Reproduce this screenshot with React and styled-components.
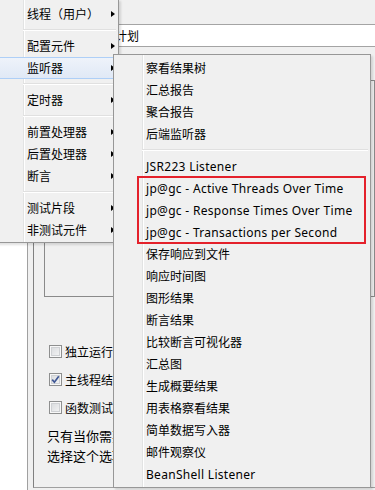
import styled, { createGlobalStyle } from "styled-components";

const GlobalStyle = createGlobalStyle`
  html, body {
    margin: 0;
    padding: 0;
    background: #f0f0f0;
  }
`;

const Screen = styled.div`
  position: relative;
  width: 375px;
  height: 490px;
  overflow: hidden;
  display: flex;
  background: #f0f0f0;
  font-family: "Noto Sans", "Noto Sans CJK SC", sans-serif;
  font-size: 12px;
  color: #000;
`;

const TreePane = styled.div`
  width: 28px;
  flex-shrink: 0;
  background: #fff;
  border-right: 1px solid #a0a0a0;
  box-sizing: border-box;
`;

const Splitter = styled.div`
  width: 5px;
  flex-shrink: 0;
`;

const Panel = styled.div`
  flex: 1;
  min-width: 0;
  height: 488px;
  box-sizing: border-box;
  border-left: 1px solid #808080;
  border-bottom: 1px solid #a0a0a0;
  display: flex;
  flex-direction: column;
`;

const NameRow = styled.div`
  margin-top: 24px;
  height: 23px;
  display: flex;
  align-items: center;
`;

const NameLabel = styled.span`
  width: 52px;
  padding-left: 6px;
  box-sizing: border-box;
  font-family: "Noto Sans CJK SC", sans-serif;
`;

const NameField = styled.div`
  flex: 1;
  height: 23px;
  box-sizing: border-box;
  background: #fff;
  border: 1px solid #a4a4a4;
  border-right: none;
  padding-left: 4px;
  display: flex;
  align-items: center;
  font-family: "Noto Sans CJK SC", sans-serif;
  white-space: nowrap;
`;

const GroupBox = styled.div`
  margin: 33px 0 0 10px;
  height: 217px;
  box-sizing: border-box;
  border: 1px solid #8a8a8a;
  flex-shrink: 0;
`;

const Options = styled.div`
  margin: 40px 20px 0 0;
  display: flex;
  flex-direction: column;
  overflow: hidden;
`;

const CheckRow = styled.label`
  height: 28px;
  padding-left: 15px;
  display: flex;
  align-items: center;
  gap: 3px;
  white-space: nowrap;
  font-family: "Noto Sans CJK SC", sans-serif;
  font-size: 12px;
`;

const Box = styled.span`
  width: 13px;
  height: 13px;
  flex-shrink: 0;
  box-sizing: border-box;
  border: 1px solid #8e8f8f;
  background: linear-gradient(135deg, #d6d8db, #f7f7f7);
  box-shadow: inset 0 0 0 1px #f8f8f8, inset 0 0 0 2px #cfd1d4;
  display: flex;
  align-items: center;
  justify-content: center;
`;

const Notes = styled.div`
  margin: 5px 20px 0 13px;
  overflow: hidden;
  font-family: "Noto Sans CJK SC", sans-serif;
  font-size: 13px;
  line-height: 20px;
  white-space: nowrap;
`;

const Menu = styled.div`
  position: absolute;
  left: ${(p) => p.$x}px;
  top: ${(p) => p.$y}px;
  width: ${(p) => p.$w}px;
  box-sizing: border-box;
  border: 1px solid #979797;
  padding: ${(p) => p.$pad};
  background:
    linear-gradient(
      to right,
      transparent 28px,
      #e2e3e3 28px,
      #e2e3e3 29px,
      #ffffff 29px,
      #ffffff 30px,
      transparent 30px
    ),
    #f0f0f0;
  box-shadow: 2px 2px 2px rgba(0, 0, 0, 0.12);
  display: flex;
  flex-direction: column;
`;

const Item = styled.div`
  height: 22px;
  box-sizing: border-box;
  padding: 0 0 0 29px;
  border: 1px solid ${(p) => (p.$active ? "#aecff7" : "transparent")};
  border-radius: 3px;
  background: ${(p) =>
    p.$active ? "linear-gradient(#eef3fa, #e0e9f6)" : "transparent"};
  display: flex;
  align-items: center;
  white-space: nowrap;
  font-family: "Noto Sans", "Noto Sans CJK SC", sans-serif;
  font-size: 12px;
  letter-spacing: ${(p) => (p.$latin ? "0.3px" : "0")};
`;

const Arrow = styled.span`
  margin-left: auto;
  width: 0;
  height: 0;
  border-top: 3.5px solid transparent;
  border-bottom: 3.5px solid transparent;
  border-left: 4px solid #000;
`;

const Separator = styled.div`
  height: 10px;
  margin-left: 26px;
  display: flex;
  align-items: center;
  &::before {
    content: "";
    flex: 1;
    height: 1px;
    background: #e0e0e0;
    border-bottom: 1px solid #fff;
  }
`;

const Marked = styled.div`
  position: relative;
  &::after {
    content: "";
    position: absolute;
    left: 21px;
    right: 2px;
    top: -1px;
    bottom: -1px;
    border: 2px solid #e4212b;
    pointer-events: none;
  }
`;

const Check = ({ checked }) => (
  <Box>
    {checked && (
      <svg width="9" height="9" viewBox="0 0 9 9">
        <path d="M1.2 4.6 L3.4 7.2 L7.8 1.2" stroke="#3f5795" strokeWidth="1.7" fill="none" />
      </svg>
    )}
  </Box>
);

const leftItems = [
  "线程（用户）",
  "-",
  "配置元件",
  "监听器",
  "-",
  "定时器",
  "-",
  "前置处理器",
  "后置处理器",
  "断言",
  "-",
  "测试片段",
  "非测试元件",
];

const topListeners = ["察看结果树", "汇总报告", "聚合报告", "后端监听器"];

const marked = [
  "jp@gc - Active Threads Over Time",
  "jp@gc - Response Times Over Time",
  "jp@gc - Transactions per Second",
];

const moreListeners = [
  "保存响应到文件",
  "响应时间图",
  "图形结果",
  "断言结果",
  "比较断言可视化器",
  "汇总图",
  "生成概要结果",
  "用表格察看结果",
  "简单数据写入器",
  "邮件观察仪",
  "BeanShell Listener",
];

const isLatin = (s) => /^[\x00-\x7f]+$/.test(s);

export default function App() {
  return (
    <>
      <GlobalStyle />
      <Screen>
        <TreePane />
        <Splitter />
        <Panel>
          <NameRow>
            <NameLabel>名称：</NameLabel>
            <NameField>测试计划</NameField>
          </NameRow>
          <GroupBox />
          <Options>
            <CheckRow>
              <Check />
              独立运行每个线程组（例如在一个组运行结束后启动下一个）
            </CheckRow>
            <CheckRow>
              <Check checked />
              主线程结束后运行 tearDown 线程组
            </CheckRow>
            <CheckRow>
              <Check />
              函数测试模式（例如：保存请求和响应数据）
            </CheckRow>
          </Options>
          <Notes>
            <div>只有当你需要记录每个请求从服务器取得的数据到文件时才需要选择函数测试模式。</div>
            <div>选择这个选项很影响性能。</div>
          </Notes>
        </Panel>

        <Menu $x={-6} $y={-1} $w={125} $pad="3px 2px 1px">
          {leftItems.map((label, i) =>
            label === "-" ? (
              <Separator key={i} />
            ) : (
              <Item key={i} $active={label === "监听器"}>
                {label}
                <Arrow />
              </Item>
            )
          )}
        </Menu>

        <Menu $x={113} $y={54} $w={258} $pad="2px">
          {topListeners.map((label) => (
            <Item key={label}>{label}</Item>
          ))}
          <Separator />
          <Item $latin>JSR223 Listener</Item>
          <Marked>
            {marked.map((label) => (
              <Item key={label} $latin>
                {label}
              </Item>
            ))}
          </Marked>
          {moreListeners.map((label) => (
            <Item key={label} $latin={isLatin(label)}>
              {label}
            </Item>
          ))}
        </Menu>
      </Screen>
    </>
  );
}
